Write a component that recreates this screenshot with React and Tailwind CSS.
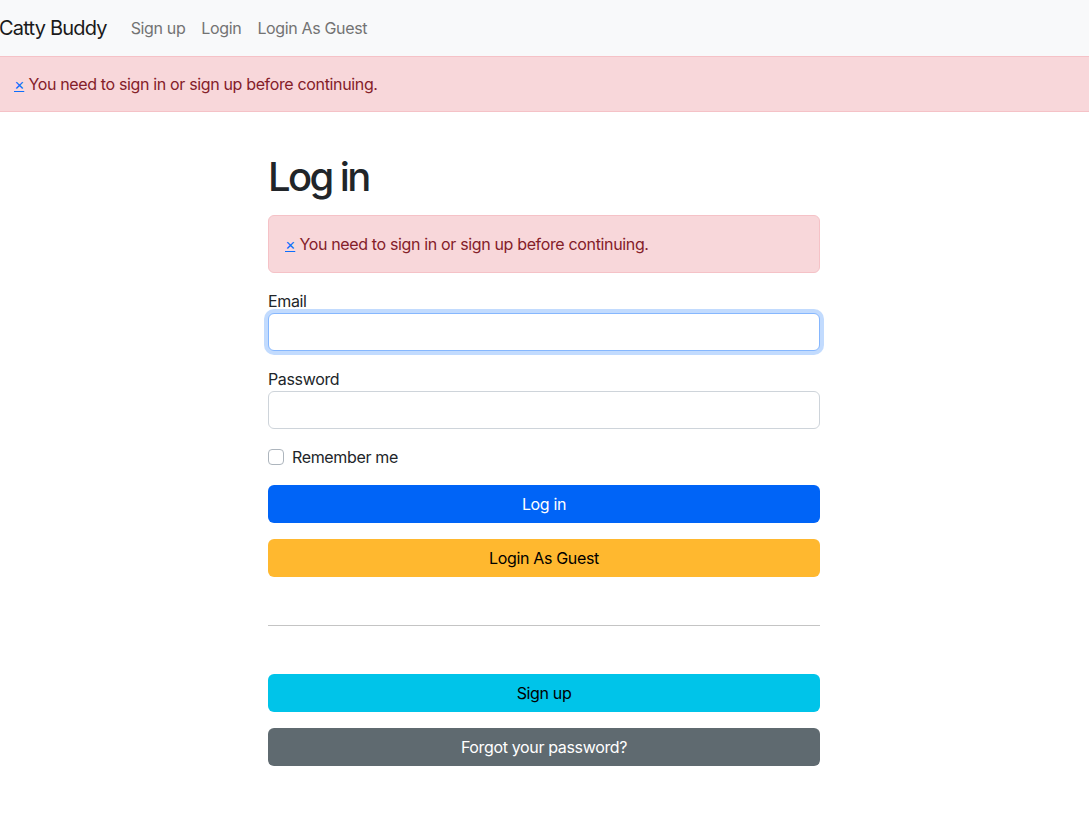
import { useState } from "react";

function Alert({ className = "" }) {
  return (
    <div className={`bg-[#f8d7da] text-[#842029] border-[#f5c2c7] text-base leading-6 ${className}`}>
      <a href="#" className="text-[#0d6efd] underline">×</a> You need to sign in or sign up before continuing.
    </div>
  );
}

function Btn({ children, className = "" }) {
  return (
    <button
      type="button"
      className={`w-full h-[38px] rounded-md text-base leading-6 ${className}`}
    >
      {children}
    </button>
  );
}

export default function App() {
  const [remember, setRemember] = useState(false);

  return (
    <div className="min-h-screen bg-white font-['Inter','Liberation_Sans',sans-serif] tracking-[-0.35px] text-[#212529]">
      {/* navbar */}
      <nav className="h-14 bg-[#f8f9fa] flex items-center">
        <a href="#" className="text-[20px] leading-[30px] text-[#1a1a1a] mr-4 -ml-px tracking-[-0.8px]">
          Catty Buddy
        </a>
        <div className="flex text-base leading-6 text-[#737373]">
          <a href="#" className="px-2">Sign up</a>
          <a href="#" className="px-2">Login</a>
          <a href="#" className="px-2">Login As Guest</a>
        </div>
      </nav>

      <Alert className="border-y px-[14px] py-[15px]" />

      <div className="flex justify-center pr-px">
        <main className="w-[552px] pt-[41px]">
          <h1 className="text-[40px] leading-[48px] font-medium mb-[14px] tracking-[-2.6px]">Log in</h1>

          <Alert className="border rounded-md px-4 py-4 mb-4" />

          <div className="mb-4">
            <label className="block text-base leading-6">Email</label>
            <input
              type="email"
              className="block w-full h-[38px] rounded-md border border-[#86b7fe] bg-white px-3 outline-none ring-4 ring-[#0d6efd]/25"
            />
          </div>

          <div className="mb-4">
            <label className="block text-base leading-6">Password</label>
            <input
              type="password"
              className="block w-full h-[38px] rounded-md border border-[#ced4da] bg-white px-3 outline-none"
            />
          </div>

          <label className="flex items-center h-6 mb-4 text-base leading-6">
            <input
              type="checkbox"
              checked={remember}
              onChange={(e) => setRemember(e.target.checked)}
              className="appearance-none w-4 h-4 rounded-[4px] border border-[#adb5bd] bg-white m-0"
            />
            <span className="ml-2">Remember me</span>
          </label>

          <div className="flex flex-col gap-4">
            <Btn className="bg-[#0064f7] text-white">Log in</Btn>
            <Btn className="bg-[#ffb82f] text-black">Login As Guest</Btn>
          </div>

          <hr className="my-12 border-0 border-t border-[#c4c4c4]" />

          <div className="flex flex-col gap-4">
            <Btn className="bg-[#00c4e9] text-black">Sign up</Btn>
            <Btn className="bg-[#5f6a70] text-white">Forgot your password?</Btn>
          </div>
        </main>
      </div>
    </div>
  );
}
